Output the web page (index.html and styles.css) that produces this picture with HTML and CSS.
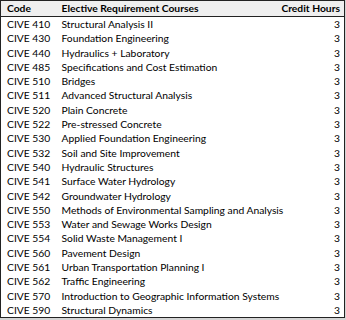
FILE: index.html
```html
<!DOCTYPE html>
<html>
<head>
<meta charset="utf-8">
<link rel="stylesheet" href="styles.css">
</head>
<body>
<table class="courses">
<colgroup><col class="c-code"><col class="c-name"><col class="c-hours"></colgroup>
<thead>
<tr><th class="code">Code</th><th class="name">Elective Requirement Courses</th><th class="hours">Credit Hours</th></tr>
</thead>
<tbody>
<tr><td class="code">CIVE 410</td><td class="name">Structural Analysis II</td><td class="hours">3</td></tr>
<tr><td class="code">CIVE 430</td><td class="name">Foundation Engineering</td><td class="hours">3</td></tr>
<tr><td class="code">CIVE 440</td><td class="name">Hydraulics + Laboratory</td><td class="hours">3</td></tr>
<tr><td class="code">CIVE 485</td><td class="name">Specifications and Cost Estimation</td><td class="hours">3</td></tr>
<tr><td class="code">CIVE 510</td><td class="name">Bridges</td><td class="hours">3</td></tr>
<tr><td class="code">CIVE 511</td><td class="name">Advanced Structural Analysis</td><td class="hours">3</td></tr>
<tr><td class="code">CIVE 520</td><td class="name">Plain Concrete</td><td class="hours">3</td></tr>
<tr><td class="code">CIVE 522</td><td class="name">Pre-stressed Concrete</td><td class="hours">3</td></tr>
<tr><td class="code">CIVE 530</td><td class="name">Applied Foundation Engineering</td><td class="hours">3</td></tr>
<tr><td class="code">CIVE 532</td><td class="name">Soil and Site Improvement</td><td class="hours">3</td></tr>
<tr><td class="code">CIVE 540</td><td class="name">Hydraulic Structures</td><td class="hours">3</td></tr>
<tr><td class="code">CIVE 541</td><td class="name">Surface Water Hydrology</td><td class="hours">3</td></tr>
<tr><td class="code">CIVE 542</td><td class="name">Groundwater Hydrology</td><td class="hours">3</td></tr>
<tr><td class="code">CIVE 550</td><td class="name">Methods of Environmental Sampling and Analysis</td><td class="hours">3</td></tr>
<tr><td class="code">CIVE 553</td><td class="name">Water and Sewage Works Design</td><td class="hours">3</td></tr>
<tr><td class="code">CIVE 554</td><td class="name">Solid Waste Management I</td><td class="hours">3</td></tr>
<tr><td class="code">CIVE 560</td><td class="name">Pavement Design</td><td class="hours">3</td></tr>
<tr><td class="code">CIVE 561</td><td class="name">Urban Transportation Planning I</td><td class="hours">3</td></tr>
<tr><td class="code">CIVE 562</td><td class="name">Traffic Engineering</td><td class="hours">3</td></tr>
<tr><td class="code">CIVE 570</td><td class="name">Introduction to Geographic Information Systems</td><td class="hours">3</td></tr>
<tr><td class="code">CIVE 590</td><td class="name">Structural Dynamics</td><td class="hours">3</td></tr>
</tbody>
</table>
</body>
</html>
```
FILE: styles.css
```css
html, body {
  margin: 0;
  padding: 0;
  background: #d4d4d4;
  width: 346px;
  height: 320px;
  overflow: hidden;
}
.courses {
  border-collapse: collapse;
  table-layout: fixed;
  width: 345px;
  background: #ffffff;
  border: 1px solid #222;
  font-family: Lato, "Open Sans", sans-serif;
  font-size: 10.3px;
  color: #000;
}
.c-code { width: 61px; }
.c-hours { width: 66px; }
.courses th, .courses td {
  padding: 0;
  height: 14.3px;
  line-height: 14.3px;
  white-space: nowrap;
  text-align: left;
}
.courses th {
  background: #efefef;
  font-weight: bold;
  height: 15px;
  line-height: 15px;
  border-bottom: 1px solid #222;
}
.courses .code {
  padding-left: 6px;
}
.courses .hours {
  text-align: right;
  padding-right: 4px;
}
```
